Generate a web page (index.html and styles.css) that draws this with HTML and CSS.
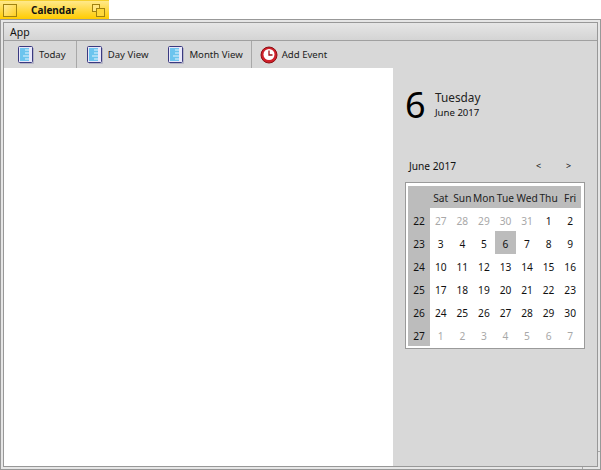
FILE: index.html
```html
<!DOCTYPE html>
<html lang="en">
<head>
  <meta charset="UTF-8">
  <title>Calendar</title>
  <link rel="stylesheet" href="styles.css">
</head>
<body>
  <div class="tab">
    <span class="tab-close"></span>
    <span class="tab-title">Calendar</span>
    <svg class="tab-zoom" width="13" height="13" viewBox="0 0 13 13">
      <rect x="0.5" y="0.5" width="7" height="7" fill="#ffe680" stroke="#a08210"/>
      <rect x="4.5" y="4.5" width="8" height="8" fill="#ffd83a" stroke="#a08210"/>
    </svg>
  </div>
  <div class="window">
    <span class="notch notch-bottom"></span>
    <span class="notch notch-right"></span>
    <div class="inner">
      <div class="menubar"><span>App</span></div>
      <div class="toolbar">
        <div class="tool tool-first">
          <svg width="16" height="18" viewBox="0 0 16 18"><use href="#doc-icon"/></svg>
          <span>Today</span>
        </div>
        <div class="tool tool-split">
          <svg width="16" height="18" viewBox="0 0 16 18"><use href="#doc-icon"/></svg>
          <span>Day View</span>
        </div>
        <div class="tool tool-month">
          <svg width="16" height="18" viewBox="0 0 16 18"><use href="#doc-icon"/></svg>
          <span>Month View</span>
        </div>
        <div class="tool tool-split tool-event">
          <svg width="18" height="18" viewBox="0 0 18 18">
            <circle cx="9" cy="9" r="8" fill="#d0202a" stroke="#8c1014"/>
            <circle cx="9" cy="8.5" r="5.5" fill="#fff"/>
            <path d="M9 4.5V9H12.5" fill="none" stroke="#a01016" stroke-width="1.3"/>
          </svg>
          <span>Add Event</span>
        </div>
      </div>
      <div class="content">
        <div class="day-pane"></div>
        <div class="side">
          <div class="date-head">
            <div class="date-num">6</div>
            <div class="date-text">
              <div class="date-day">Tuesday</div>
              <div class="date-month">June 2017</div>
            </div>
          </div>
          <div class="cal-nav">
            <span class="cal-title">June 2017</span>
            <span class="cal-arrow">&lt;</span>
            <span class="cal-arrow cal-arrow-last">&gt;</span>
          </div>
          <div class="cal-box">
            <div class="cal-grid">
              <div class="head"></div><div class="head">Sat</div><div class="head">Sun</div><div class="head">Mon</div><div class="head">Tue</div><div class="head">Wed</div><div class="head">Thu</div><div class="head">Fri</div>
              <div class="week">22</div><div class="off">27</div><div class="off">28</div><div class="off">29</div><div class="off">30</div><div class="off">31</div><div>1</div><div>2</div>
              <div class="week">23</div><div>3</div><div>4</div><div>5</div><div class="today">6</div><div>7</div><div>8</div><div>9</div>
              <div class="week">24</div><div>10</div><div>11</div><div>12</div><div>13</div><div>14</div><div>15</div><div>16</div>
              <div class="week">25</div><div>17</div><div>18</div><div>19</div><div>20</div><div>21</div><div>22</div><div>23</div>
              <div class="week">26</div><div>24</div><div>25</div><div>26</div><div>27</div><div>28</div><div>29</div><div>30</div>
              <div class="week">27</div><div class="off">1</div><div class="off">2</div><div class="off">3</div><div class="off">4</div><div class="off">5</div><div class="off">6</div><div class="off">7</div>
            </div>
          </div>
        </div>
      </div>
    </div>
  </div>
  <svg width="0" height="0" class="defs">
    <defs>
      <g id="doc-icon">
        <rect x="0.5" y="0.5" width="14" height="16" rx="1" fill="#e8e8fa" stroke="#3a3a80"/>
        <rect x="2" y="2" width="9" height="13" fill="#6cc4ee"/>
        <path d="M7 4H11M7 7H11M5 10H11M7 13H11" stroke="#e4f4fc" stroke-width="1"/>
        <path d="M15.5 2V17.5H2" fill="none" stroke="#b4b4c4"/>
      </g>
    </defs>
  </svg>
</body>
</html>
```

FILE: styles.css
```css
html, body {
  margin: 0;
  padding: 0;
}
body {
  width: 601px;
  height: 470px;
  overflow: hidden;
  background: #fff;
  font-family: "Noto Sans", sans-serif;
  font-size: 11px;
  color: #111;
}
.defs {
  display: block;
}
.tab {
  box-sizing: border-box;
  width: 109px;
  height: 20px;
  padding: 0 4px 0 3px;
  display: flex;
  align-items: center;
  background: linear-gradient(#ffe98a, #ffcb00);
  border-top: 1px solid #f4d030;
  border-bottom: 1px solid #e0ac00;
}
.tab-close {
  box-sizing: border-box;
  width: 14px;
  height: 13px;
  border: 1px solid #a08210;
  background: linear-gradient(135deg, #ffec9a, #ffcf20);
}
.tab-title {
  margin-left: 14px;
  font-weight: bold;
  font-size: 10px;
  color: #111;
}
.tab-zoom {
  margin-left: auto;
}
.window {
  position: relative;
  box-sizing: border-box;
  width: 601px;
  height: 451px;
  margin-top: -1px;
  padding: 2px;
  background: #e6e6e6;
  border: 1px solid #989898;
}
.notch {
  position: absolute;
  background: #a8a8a8;
}
.notch-bottom {
  left: 581px;
  bottom: 0;
  width: 1px;
  height: 2px;
}
.notch-right {
  right: 0;
  top: 431px;
  width: 2px;
  height: 1px;
}
.inner {
  border: 1px solid #989898;
}
.menubar {
  box-sizing: border-box;
  height: 18px;
  padding-left: 6px;
  display: flex;
  align-items: center;
  border-bottom: 1px solid #a0a0a0;
  background: linear-gradient(#e6e6e6, #d4d4d4);
  font-size: 10.5px;
}
.toolbar {
  height: 27px;
  display: flex;
  background: #d8d8d8;
  font-size: 9.6px;
  color: #222;
}
.tool {
  box-sizing: border-box;
  height: 27px;
  display: flex;
  align-items: center;
  gap: 5px;
  padding: 0 11px 0 9px;
}
.tool-first {
  padding-left: 14px;
  padding-right: 10px;
}
.tool-split {
  border-left: 1px solid #a8a8a8;
  padding-left: 10px;
}
.tool-month {
  padding-right: 8px;
}
.tool-event {
  padding-left: 8px;
  gap: 4px;
}
.content {
  height: 398px;
  display: flex;
}
.day-pane {
  width: 389px;
  background: #fff;
}
.side {
  width: 204px;
  padding: 0 12px;
  box-sizing: border-box;
  background: #d8d8d8;
}
.date-head {
  display: flex;
  align-items: center;
  margin-top: 17px;
  height: 40px;
}
.date-num {
  font-size: 36px;
  line-height: 40px;
  width: 30px;
  color: #000;
}
.date-text {
  margin-top: -1px;
}
.date-day {
  font-size: 11.8px;
  line-height: 16px;
  color: #222;
}
.date-month {
  margin-top: 1px;
  font-size: 9.6px;
  line-height: 14px;
}
.cal-nav {
  display: flex;
  align-items: center;
  height: 16px;
  margin-top: 33px;
  padding-left: 4px;
  font-size: 10.2px;
}
.cal-title {
  margin-right: auto;
}
.cal-arrow {
  margin-top: -2px;
  font-size: 9px;
  width: 30px;
}
.cal-arrow-last {
  width: 19px;
}
.cal-box {
  box-sizing: border-box;
  width: 180px;
  height: 167px;
  margin-top: 8px;
  padding: 3px 2px;
  background: #fff;
  border: 1px solid #9a9a9a;
}
.cal-grid {
  display: grid;
  grid-template-columns: 22px repeat(7, 21.57px);
  grid-template-rows: 22px repeat(6, 23px);
  font-size: 10.2px;
}
.cal-grid div {
  display: flex;
  align-items: center;
  justify-content: center;
  padding-top: 2px;
  box-sizing: border-box;
}
.cal-grid .head {
  background: #bcbcbc;
  color: #222;
  padding-top: 1px;
}
.cal-grid .week {
  background: #bcbcbc;
}
.cal-grid .off {
  color: #a8a8a8;
}
.cal-grid .today {
  background: #bcbcbc;
}
```
